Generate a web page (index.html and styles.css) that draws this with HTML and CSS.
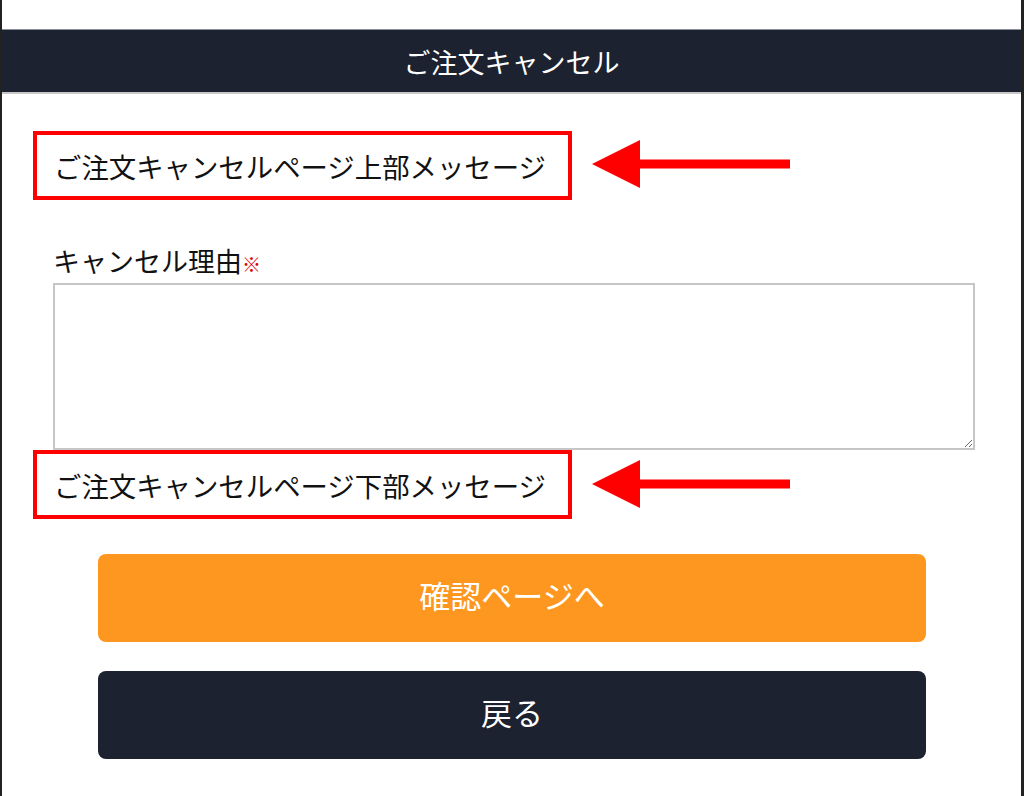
FILE: index.html
```html
<!DOCTYPE html>
<html lang="ja">
<head>
<meta charset="utf-8">
<title>ご注文キャンセル</title>
<link rel="stylesheet" href="styles.css">
</head>
<body>
<div class="page">
  <div class="header">ご注文キャンセル</div>
  <div class="content">
    <div class="notice notice-top">ご注文キャンセルページ上部メッセージ</div>
    <div class="field">
      <label class="label" for="reason">キャンセル理由<span class="req">※</span></label>
      <textarea id="reason" class="reason"></textarea>
    </div>
    <div class="notice">ご注文キャンセルページ下部メッセージ</div>
  </div>
  <div class="actions">
    <button class="btn btn-confirm">確認ページへ</button>
    <button class="btn btn-back">戻る</button>
  </div>
  <svg class="arrow arrow-1" width="200" height="48" viewBox="0 0 200 48"><polygon points="0,24 48,0 48,48" fill="#ff0000"/><rect x="46" y="19.5" width="152" height="9" fill="#ff0000"/></svg>
  <svg class="arrow arrow-2" width="200" height="48" viewBox="0 0 200 48"><polygon points="0,24 48,0 48,48" fill="#ff0000"/><rect x="46" y="19.5" width="152" height="9" fill="#ff0000"/></svg>
</div>
</body>
</html>
```
FILE: styles.css
```css
* { box-sizing: border-box; }
html, body { margin: 0; padding: 0; background: #fff; }
body {
  font-family: "Noto Sans CJK JP", "Noto Sans", sans-serif;
  color: #111;
}
.page {
  position: relative;
  width: 1024px;
  height: 796px;
  overflow: hidden;
  border-left: 2px solid #222;
  border-right: 3px solid #222;
  padding-top: 29px;
}
.header {
  height: 65px;
  background: #1c2230;
  border-top: 1px solid #8a8f99;
  border-bottom: 2px solid #c8c8c8;
  color: #fff;
  font-size: 27px;
  display: flex;
  align-items: center;
  justify-content: center;
}
.content {
  padding: 37px 0 0 31px;
}
.notice {
  width: 539px;
  height: 69px;
  border: 4px solid #ff0000;
  padding-left: 17px;
  display: flex;
  align-items: center;
  font-size: 27.4px;
  color: #111;
}
.field {
  margin: 46px 0 0 20px;
}
.label {
  display: block;
  font-size: 27px;
  line-height: 30px;
  height: 37px;
}
.req {
  color: #e00000;
  font-size: 19px;
  font-weight: bold;
}
.reason {
  display: block;
  width: 922px;
  height: 167px;
  border: 2px solid #c6c6c6;
  border-radius: 0;
  resize: vertical;
  margin: 0;
  font-family: inherit;
}
.actions {
  padding: 35px 0 0 96px;
  display: flex;
  flex-direction: column;
  gap: 29px;
}
.btn {
  width: 828px;
  height: 88px;
  border: none;
  border-radius: 8px;
  color: #fff;
  font-family: "Noto Sans CJK JP", "Noto Sans", sans-serif;
  font-size: 31px;
  padding: 0 0 8px;
  display: flex;
  align-items: center;
  justify-content: center;
}
.btn-confirm { background: #fd971f; }
.btn-back { background: #1c2230; }
.arrow {
  position: absolute;
  left: 590px;
}
.arrow-1 { top: 140px; }
.arrow-2 { top: 460px; }
```
